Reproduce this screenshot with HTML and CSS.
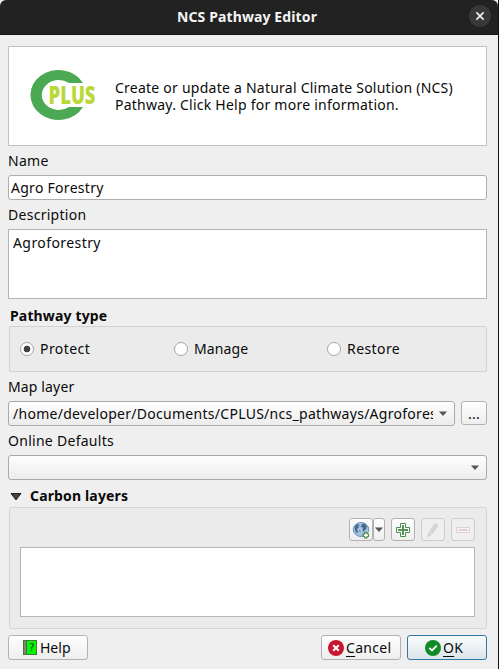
FILE: index.html
```
<!DOCTYPE html>
<html lang="en">
<head>
<meta charset="utf-8">
<title>NCS Pathway Editor</title>
<link rel="stylesheet" href="styles.css">
</head>
<body>
<div class="window">
  <header class="titlebar">
    <h1 class="title">NCS Pathway Editor</h1>
    <button class="close" aria-label="Close"><svg width="22" height="22" viewBox="0 0 22 22"><path d="M7.400 7.400l7.200 7.200M14.600 7.400l-7.200 7.200" stroke="#f5f5f5" stroke-width="1.500"/></svg></button>
  </header>
  <main class="content">
    <section class="banner">
      <svg class="logo" width="68" height="52" viewBox="0 0 68 52">
        <path d="M53 14A28 25 0 1 0 53 38H39A17 15 0 1 1 39 14Z" fill="#4aa952"/>
        <text class="logo-text" x="18.500" y="35" textLength="47" lengthAdjust="spacingAndGlyphs">PLUS</text>
      </svg>
      <p class="intro">Create or update a Natural Climate Solution (NCS)<br>Pathway. Click Help for more information.</p>
    </section>
    <div class="label"><span>Name</span></div>
    <div class="field"><span>Agro Forestry</span></div>
    <div class="label"><span>Description</span></div>
    <div class="textarea"><span class="wide">Agroforestry</span></div>
    <h2 class="heading"><span>Pathway type</span></h2>
    <div class="group radios">
      <div class="radio"><i class="dot checked"></i><span class="wide">Protect</span></div>
      <div class="radio"><i class="dot"></i><span class="narrow">Manage</span></div>
      <div class="radio"><i class="dot"></i><span class="wide">Restore</span></div>
    </div>
    <div class="label"><span class="narrow">Map layer</span></div>
    <div class="row">
      <div class="combo"><span class="value">/home/developer/Documents/CPLUS/ncs_pathways/Agroforestry.tif</span><svg class="arrow" width="8" height="5" viewBox="0 0 8 5"><path d="M0 .5h8L4 5z"/></svg></div>
      <button class="btn browse">...</button>
    </div>
    <div class="label"><span>Online Defaults</span></div>
    <div class="combo"><span class="value"></span><svg class="arrow" width="8" height="5" viewBox="0 0 8 5"><path d="M0 .5h8L4 5z"/></svg></div>
    <h2 class="heading collapsible"><svg class="triangle" width="12" height="8" viewBox="0 0 12 8"><path d="M1 .5h10L6 7z" fill="#444" stroke="#222"/></svg><span>Carbon layers</span></h2>
    <div class="group carbon">
      <div class="tools">
        <div class="split">
          <button class="btn tool" aria-label="Add default layer"><svg width="18" height="18" viewBox="0 0 18 18">
            <ellipse cx="9" cy="8.500" rx="7.800" ry="7" fill="#a5c3e4" stroke="#6f93bb"/>
            <path d="M2.500 6l2.500-3 2 .5-1 2 1 1-2 1.500 1 3-1 1.500-2-3zM10 3l2.500-.5 2.500 3-1 3-1.500.5-.5 2.500-1.500-2.500.5-2-2-1.500z" fill="#49698d"/>
            <path d="M7 4.500l1.500 1M7 9l1.500 2M14 5v2" stroke="#5d7ea5"/>
            <path d="M12 11h3.500v1.500H17V16h-1.500v1.500H12V16h-1.500v-3.500H12z" fill="#519051"/><path d="M13 12.500h1.500v1H16V15h-1.500v1H13v-1h-1v-1.500h1z" fill="#fff"/>
          </svg></button>
          <button class="btn drop" aria-label="More"><svg class="arrow" width="8" height="5" viewBox="0 0 8 5"><path d="M0 .5h8L4 5z"/></svg></button>
        </div>
        <button class="btn tool" aria-label="Add"><svg width="14" height="14" viewBox="0 0 14 14"><path d="M4.500 .5h5v4h4v5h-4v4h-5v-4h-4v-5h4z" fill="#fff" stroke="#4f8b4f"/><path d="M7 2v10M2 7h10" stroke="#579357" stroke-width="2"/></svg></button>
        <button class="btn tool disabled" aria-label="Edit"><svg width="16" height="16" viewBox="0 0 16 16"><path d="M3 14.500l1-4.500 6-8.500 3 2-6 8.500z" fill="#dfdfda" stroke="#cbcbc8" stroke-width=".8"/><path d="M6.500 10.500l5-7.500M3 14.500l1.500-2" stroke="#c5c5c2" stroke-width="1"/></svg></button>
        <button class="btn tool disabled" aria-label="Remove"><svg width="14" height="14" viewBox="0 0 14 14"><path d="M.5 4.500h13v5H.5z" fill="#faf5f5" stroke="#e0d0d0"/><path d="M2.500 7h9" stroke="#dfcfcf" stroke-width="2"/></svg></button>
      </div>
      <div class="list"></div>
    </div>
    <footer class="actions">
      <button class="btn action help"><svg width="14" height="15" viewBox="0 0 14 15"><path d="M0 0h14v15H0z" fill="#3e7a34"/><path d="M1 1h2v13H1z" fill="#8b7f7b"/><path d="M4 1h9v13H4z" fill="#08f408"/><text class="mark" x="5.700" y="11">?</text></svg><span>Help</span></button>
      <button class="btn action cancel"><svg width="16" height="16" viewBox="0 0 16 16"><circle cx="8" cy="8" r="8" fill="#c9162f"/><path d="M5.200 5.200l5.600 5.600M10.800 5.200l-5.600 5.600" stroke="#fff" stroke-width="2"/></svg><span><u>C</u>ancel</span></button>
      <button class="btn action ok"><svg width="16" height="16" viewBox="0 0 16 16"><circle cx="8" cy="8" r="8" fill="#118a27"/><path d="M4.300 7.800l2.700 2.700 4.800-4.800" fill="none" stroke="#fff" stroke-width="1.800"/></svg><span><u>O</u>K</span></button>
    </footer>
  </main>
</div>
</body>
</html>
```
FILE: styles.css
```
* { box-sizing: border-box; }
html, body { margin: 0; height: 100%; overflow: hidden; }
body { background: #111; color: #0a0a0a; font: 14px/17px "Noto Sans", "Open Sans", sans-serif; letter-spacing: .28px; }
span { white-space: nowrap; }
button { font: inherit; letter-spacing: inherit; color: inherit; padding: 0; }
.wide { letter-spacing: .42px; }
.narrow { letter-spacing: .14px; }
.window { width: 498px; height: 669px; background: #efefef; }
.titlebar { height: 35px; background: #222; border-bottom: 1px solid #161616; display: grid; grid-template-columns: 42px 1fr 44px; align-items: center; border-radius: 6px 6px 0 0; }
.title { grid-column: 2; margin: 0 2px 1px 0; text-align: center; color: #f4f4f4; font-size: 14px; line-height: 20px; font-weight: 700; letter-spacing: .12px; }
.close { width: 22px; height: 22px; margin: 0 0 2px 15px; border: 0; border-radius: 50%; background: #383838; display: flex; }
.content { padding: 11px 11px 0 8px; display: flex; flex-direction: column; }
.banner { height: 100px; background: #fff; border: 1px solid #c2c2c2; display: flex; align-items: center; padding-left: 21px; }
.logo { flex: none; margin-bottom: 2px; overflow: visible; }
.logo-text { font: 800 25px "Open Sans", sans-serif; letter-spacing: 0; fill: #b9d839; }
.intro { margin: 0 0 0 17px; letter-spacing: .24px; white-space: nowrap; }
.label { height: 29px; display: flex; align-items: center; }
.field { height: 25px; border: 1px solid #adadad; border-radius: 3px; background: #fff; padding: 0 2px; display: flex; align-items: center; }
.textarea { height: 70px; border: 1px solid #b4b4b4; background: #fff; padding: 4px; }
.heading { height: 27px; margin: 0; padding: 6px 0 0 2px; font-size: 14px; font-weight: 700; letter-spacing: .15px; display: flex; align-items: center; }
.collapsible { padding-top: 4px; gap: 8px; }
.triangle { margin-top: 2px; }
.group { margin-left: 1px; background: #ebebeb; border: 1px solid #d3d3d3; border-radius: 2px; }
.radios { height: 46px; padding: 0 0 1px 10px; display: grid; grid-template-columns: 154px 153px 1fr; align-items: center; }
.radio { display: flex; align-items: center; gap: 6px; }
.dot { width: 14px; height: 14px; border: 1px solid #a6a6a6; border-radius: 50%; background: #fff; }
.checked { background: radial-gradient(circle, #414141 0 3px, #fff 3.700px); }
.row { display: flex; gap: 6px; }
.combo { height: 25px; flex: 1 0 25px; min-width: 0; border: 1px solid #aaa; border-radius: 3px; background: linear-gradient(#fefefe, #ececec); display: flex; align-items: center; padding: 0 7px 0 4px; }
.value { flex: 1; min-width: 0; overflow: hidden; margin-right: 6px; line-height: 20px; }
.arrow { flex: none; fill: #555; }
.btn { border: 1px solid #b2b2b2; border-radius: 3px; background: linear-gradient(#fefefe, #eee); display: flex; align-items: center; justify-content: center; }
.browse { width: 26px; height: 24px; }
.carbon { height: 122px; padding: 10px 11px 11px 10px; }
.tools { display: flex; justify-content: flex-end; gap: 6px; height: 23px; }
.split { display: flex; }
.tool { width: 24px; height: 23px; }
.drop { width: 12px; height: 23px; }
.disabled { border-color: #cdcdcd; background: #efefef; }
.list { height: 70px; margin-top: 6px; background: #fff; border: 1px solid #b7b7b7; }
.actions { display: flex; gap: 6px; margin-top: 6px; }
.action { width: 80px; height: 25px; gap: 2px; justify-content: flex-start; }
.help { margin-right: auto; padding-left: 14px; gap: 3px; letter-spacing: 0; }
.cancel { padding-left: 6px; }
.ok { padding-left: 17px; border-color: #3278a5; background: linear-gradient(#fafcfd, #dce5ea); }
.mark { font: 10px "DejaVu Sans Mono", monospace; letter-spacing: 0; fill: #063806; }
u { text-underline-offset: 3px; text-decoration-thickness: 1px; }
```
